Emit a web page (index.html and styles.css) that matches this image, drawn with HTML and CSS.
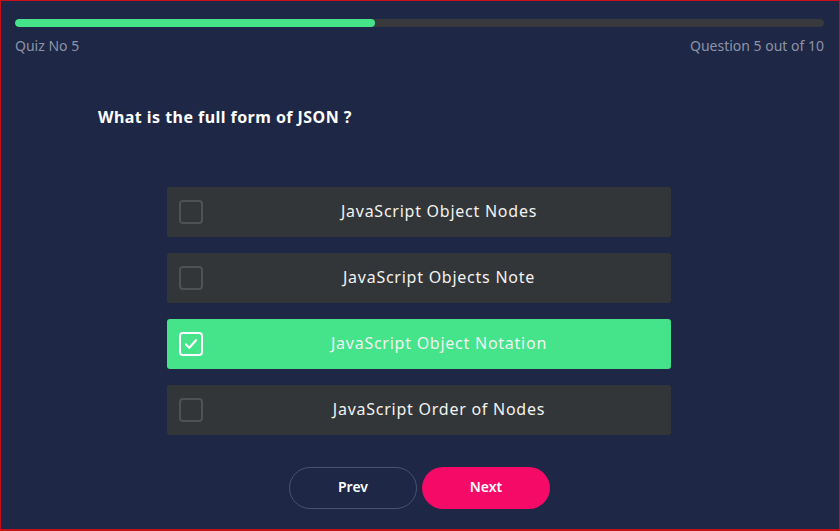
FILE: index.html
```html
<!DOCTYPE html>
<html>
<head>
<meta charset="utf-8">
<link rel="stylesheet" href="styles.css">
</head>
<body>
<div class="frame">
  <div class="progress"><div class="fill" style="width:44.5%"></div></div>
  <div class="meta">
    <span>Quiz No 5</span>
    <span>Question 5 out of 10</span>
  </div>
  <h2 class="question">What is the full form of JSON ?</h2>
  <div class="options">
    <div class="option"><span class="box"></span><span class="label">JavaScript Object Nodes</span></div>
    <div class="option"><span class="box"></span><span class="label">JavaScript Objects Note</span></div>
    <div class="option selected"><span class="box"><svg viewBox="0 0 24 24" width="20" height="20"><path d="M6 12.5l4 4 8-9" fill="none" stroke="#fff" stroke-width="2.6" stroke-linecap="round" stroke-linejoin="round"/></svg></span><span class="label">JavaScript Object Notation</span></div>
    <div class="option"><span class="box"></span><span class="label">JavaScript Order of Nodes</span></div>
  </div>
  <div class="buttons">
    <button class="btn prev">Prev</button>
    <button class="btn next">Next</button>
  </div>
</div>
</body>
</html>
```
FILE: styles.css
```css
html, body {
  margin: 0;
  padding: 0;
}
body {
  width: 840px;
  height: 531px;
  font-family: "Noto Sans", "Open Sans", sans-serif;
  background: #c8101a;
}
.frame {
  box-sizing: border-box;
  margin: 1px 1px 2px 1px;
  height: 528px;
  background: #1e2745;
  padding: 18px 15px 0 14px;
  display: flex;
  flex-direction: column;
}
.progress {
  height: 8px;
  border-radius: 4px;
  background: #38393c;
  overflow: hidden;
}
.fill {
  height: 100%;
  background: #45e48b;
  border-radius: 4px;
}
.meta {
  display: flex;
  justify-content: space-between;
  margin-top: 9px;
  font-size: 14px;
  color: #8c93a8;
  line-height: 20px;
}
.question {
  margin: 50px 0 0 83px;
  font-size: 16px;
  font-weight: 700;
  color: #ffffff;
  line-height: 22px;
  letter-spacing: 0.45px;
}
.options {
  margin: 59px 0 0 152px;
  width: 504px;
  display: flex;
  flex-direction: column;
  gap: 16px;
}
.option {
  height: 50px;
  border-radius: 3px;
  background: #333638;
  display: flex;
  align-items: center;
  padding: 0 12px;
}
.box {
  box-sizing: border-box;
  width: 24px;
  height: 24px;
  border: 2px solid #4f5255;
  border-radius: 4px;
  display: flex;
  align-items: center;
  justify-content: center;
}
.label {
  flex: 1;
  text-align: center;
  color: #f2f2f2;
  font-size: 16px;
  letter-spacing: 0.75px;
  padding-bottom: 3px;
  padding-left: 16px;
}
.selected {
  background: #45e48b;
}
.selected .box {
  border-color: #ffffff;
}
.buttons {
  margin: 32px 0 0 274px;
  display: flex;
  gap: 5px;
}
.btn {
  width: 128px;
  height: 42px;
  border-radius: 21px;
  font-family: inherit;
  font-size: 14px;
  font-weight: 600;
  color: #ffffff;
  padding: 0 0 3px 0;
  cursor: pointer;
}
.prev {
  background: transparent;
  border: 1px solid #4a5270;
}
.next {
  background: #f50a67;
  border: none;
}
```
